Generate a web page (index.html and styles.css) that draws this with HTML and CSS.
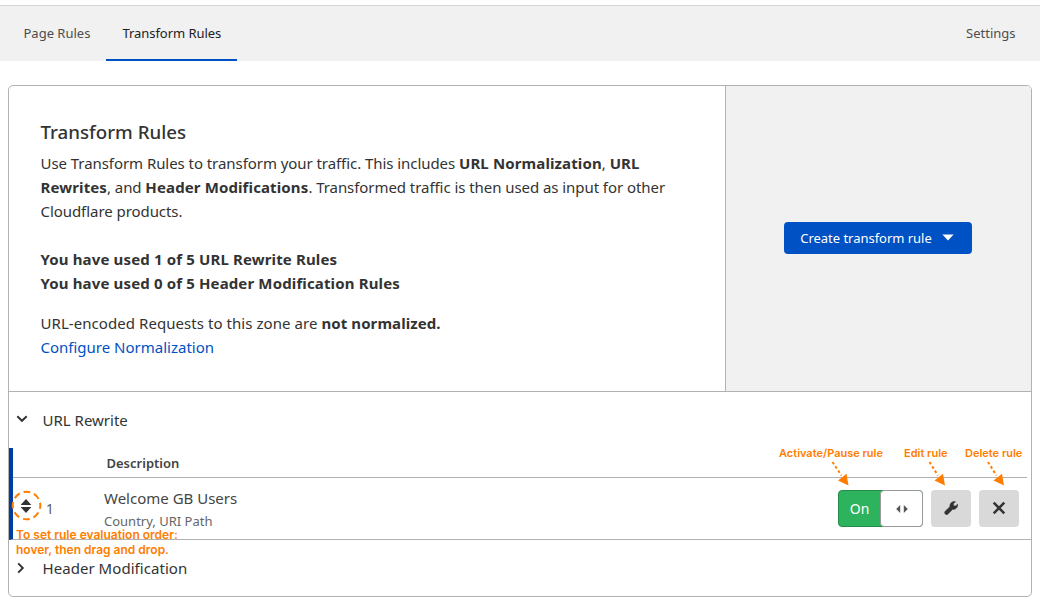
FILE: index.html
```html
<!DOCTYPE html>
<html lang="en">
<head>
<meta charset="utf-8">
<title>Transform Rules</title>
<link rel="stylesheet" href="styles.css">
</head>
<body>
<nav class="tabs">
  <a class="tab"><span>Page Rules</span></a>
  <a class="tab active"><span>Transform Rules</span></a>
  <a class="tab settings"><span>Settings</span></a>
</nav>
<main class="card">
  <section class="summary">
    <div class="intro">
      <h1>Transform Rules</h1>
      <p class="about">Use Transform Rules to transform your traffic. This includes <b>URL Normalization</b>, <b>URL</b><br><b>Rewrites</b>, and <b>Header Modifications</b>. Transformed traffic is then used as input for other<br>Cloudflare products.</p>
      <p class="usage"><b>You have used 1 of 5 URL Rewrite Rules</b><br><b>You have used 0 of 5 Header Modification Rules</b></p>
      <p class="norm">URL-encoded Requests to this zone are <b>not normalized.</b><br><a class="link">Configure Normalization</a></p>
    </div>
    <div class="action">
      <button class="create"><span>Create transform rule</span><svg width="12" height="7" viewBox="0 0 12 7"><path d="M.4.5h11.2L6 6.5z" fill="#fff"/></svg></button>
    </div>
  </section>
  <section class="group">
    <header class="group-head">
      <svg width="12" height="8" viewBox="0 0 12 8"><path d="M1.3 1.2 6 5.8l4.700-4.600" fill="none" stroke="#333" stroke-width="1.9"/></svg>
      <span>URL Rewrite</span>
    </header>
    <div class="table">
      <div class="thead"><span>Description</span></div>
      <div class="rule">
        <svg class="handle" width="12" height="14" viewBox="0 0 12 14"><path d="M.6 6 6 0l5.400 6zM.6 8h10.800L6 14z" fill="#333"/></svg>
        <span class="order">1</span>
        <div class="desc">
          <div class="name">Welcome GB Users</div>
          <div class="fields">Country, URI Path</div>
        </div>
        <div class="controls">
          <div class="toggle"><span class="on">On</span><span class="knob"><svg width="12" height="8" viewBox="0 0 12 8"><path d="M4.200 0v8L.2 4zM7.800 0v8l4-4z" fill="#555"/></svg></span></div>
          <button class="icon-btn"><svg width="14" height="14" viewBox="0 0 14 14"><path d="M1.200 10.200 5.900 5.700C5.400 2.800 7.900.1 11.500.7L9.300 2.900l.4 1.800 1.900.3 2.100-2c.5 3.300-2.200 5.900-5 5.300L4 13.100c-.7.700-1.800.7-2.600.1-.9-.8-1-2.100-.2-3z" fill="#333" stroke="#333" stroke-width=".5"/></svg></button>
          <button class="icon-btn"><svg width="14" height="14" viewBox="0 0 14 14"><path d="m1.700 1.700 10.600 10.600M12.300 1.700 1.700 12.300" fill="none" stroke="#333" stroke-width="2.500"/></svg></button>
        </div>
      </div>
    </div>
  </section>
  <section class="group">
    <header class="group-head closed">
      <svg width="8" height="12" viewBox="0 0 8 12"><path d="M1.200 1.300 5.800 6l-4.600 4.700" fill="none" stroke="#333" stroke-width="1.900"/></svg>
      <span>Header Modification</span>
    </header>
  </section>
</main>
<svg class="marks" width="1040" height="607" viewBox="0 0 1040 607">
  <circle cx="26.500" cy="505.500" r="13.800" fill="none" stroke="#ff7d00" stroke-width="2" stroke-dasharray="6.800 4.038" stroke-dashoffset="3.400"/>
  <g stroke="#ff7d00" stroke-width="2" stroke-dasharray="2.700 2.400"><path d="m832.500 462 9 13.500M929.500 462l8.500 13.500M988 462l8.500 13.500"/></g>
  <path d="m848.500 485.500-10.500-5 8.500-6.700zM945 485.500l-10.500-5 8.500-6.700zM1004 485.500l-10.500-5 8.500-6.700z" fill="#ff7d00"/>
</svg>
<span class="note a">Activate/Pause rule</span>
<span class="note e">Edit rule</span>
<span class="note d">Delete rule</span>
<span class="note o1">To set rule evaluation order:</span>
<span class="note o2">hover, then drag and drop.</span>
</body>
</html>
```
FILE: styles.css
```css
* { box-sizing: border-box; }
body { margin: 0; padding-top: 5px; height: 607px; overflow: hidden; position: relative; background: #fff; color: #333; font: 15px/24px "Noto Sans", "Open Sans", sans-serif; white-space: nowrap; }
p, h1 { margin: 0; }
b { font-weight: 700; letter-spacing: 0.14px; }
button { border: 0; padding: 0; font: inherit; display: flex; align-items: center; justify-content: center; }
.tabs { display: flex; height: 56px; border-top: 1px solid #d5d5d5; background: #f1f1f1; padding: 0 8.5px 0 7.500px; font-size: 13px; color: #4d4d4d; }
.tab { padding: 15px 16px 0; }
.tab.active { color: #222; border-bottom: 2px solid #0051c3; width: 131px; letter-spacing: -0.06px; }
.tab:first-child { width: 98.500px; }
.tab.active { padding-left: 16.500px; }
.settings { margin-left: auto; }
.card { margin: 24px 8px 0; width: 1024px; height: 512px; border: 1px solid #b2b2b2; border-radius: 5px; overflow: hidden; }
.summary { display: flex; height: 306px; border-bottom: 1px solid #b2b2b2; }
.intro { width: 717px; border-right: 1px solid #b2b2b2; padding: 32px 0 0 31.5px; }
h1 { font-size: 18.700px; line-height: 28px; font-weight: 500; margin-bottom: 5px; }
.about { letter-spacing: -0.06px; }
.about b { letter-spacing: 0.12px; }
.usage { margin-top: 24px; }
.norm { margin-top: 16px; letter-spacing: 0.06px; }
.norm b { letter-spacing: 0.08px; }
.link { color: #0051c3; letter-spacing: 0; }
.action { flex: 1; background: #f1f1f1; display: flex; align-items: center; justify-content: center; }
.create { width: 188px; height: 32px; margin-right: 2px; margin-bottom: 2px; border-radius: 4px; background: #0051c3; color: #fff; font-size: 13px; letter-spacing: -0.03px; gap: 10px; padding-right: 1px; }
.group-head { display: flex; align-items: center; height: 56px; padding-left: 7px; }
.group-head svg { margin-right: 14.5px; margin-bottom: 3px; }
.closed svg { margin-left: 1px; margin-right: 17.5px; margin-bottom: 1px; }
.closed { letter-spacing: 0.05px; }
.table { border-left: 4px solid #003da1; border-bottom: 1px solid #b2b2b2; height: 92px; }
.thead { height: 30px; margin-right: 4px; border-bottom: 1px solid #b2b2b2; padding: 3px 0 0 93.500px; font-size: 13px; font-weight: 600; color: #444; }
.rule { display: flex; height: 61px; }
.handle { flex: none; margin: 21px 14px 0 7px; }
.order { width: 57px; flex: none; padding-top: 19px; font-size: 13.500px; color: #595959; }
.desc { flex: 1; padding-top: 8px; padding-left: 1px; color: #444; }
.fields { font-size: 13px; line-height: 22px; color: #666; }
.controls { display: flex; gap: 8px; padding: 12px 12px 0 0; height: 49px; }
.toggle { width: 85px; display: flex; background: #2db35e; border: 1px solid #238c49; border-radius: 4px; }
.on { width: 42px; padding-right: 1px; text-align: center; color: #fff; font-size: 14px; line-height: 36px; }
.knob { flex: 1; margin: -1px; border: 1px solid #999; border-radius: 4px; background: #fff; display: flex; align-items: center; justify-content: center; }
.icon-btn { width: 40px; height: 37px; border-radius: 4px; background: #d9d9d9; padding-bottom: 1px; }
.marks { position: absolute; left: 0; top: 0; }
.note { position: absolute; color: #ff7d00; font: 600 11px/14px Inter, sans-serif; }
.a { left: 779px; top: 446px; }
.e { left: 904px; top: 446px; }
.d { left: 965px; top: 446px; }
.o1 { left: 16px; top: 528px; font-size: 12px; }
.o2 { left: 16px; top: 543px; font-size: 12px; }
```
